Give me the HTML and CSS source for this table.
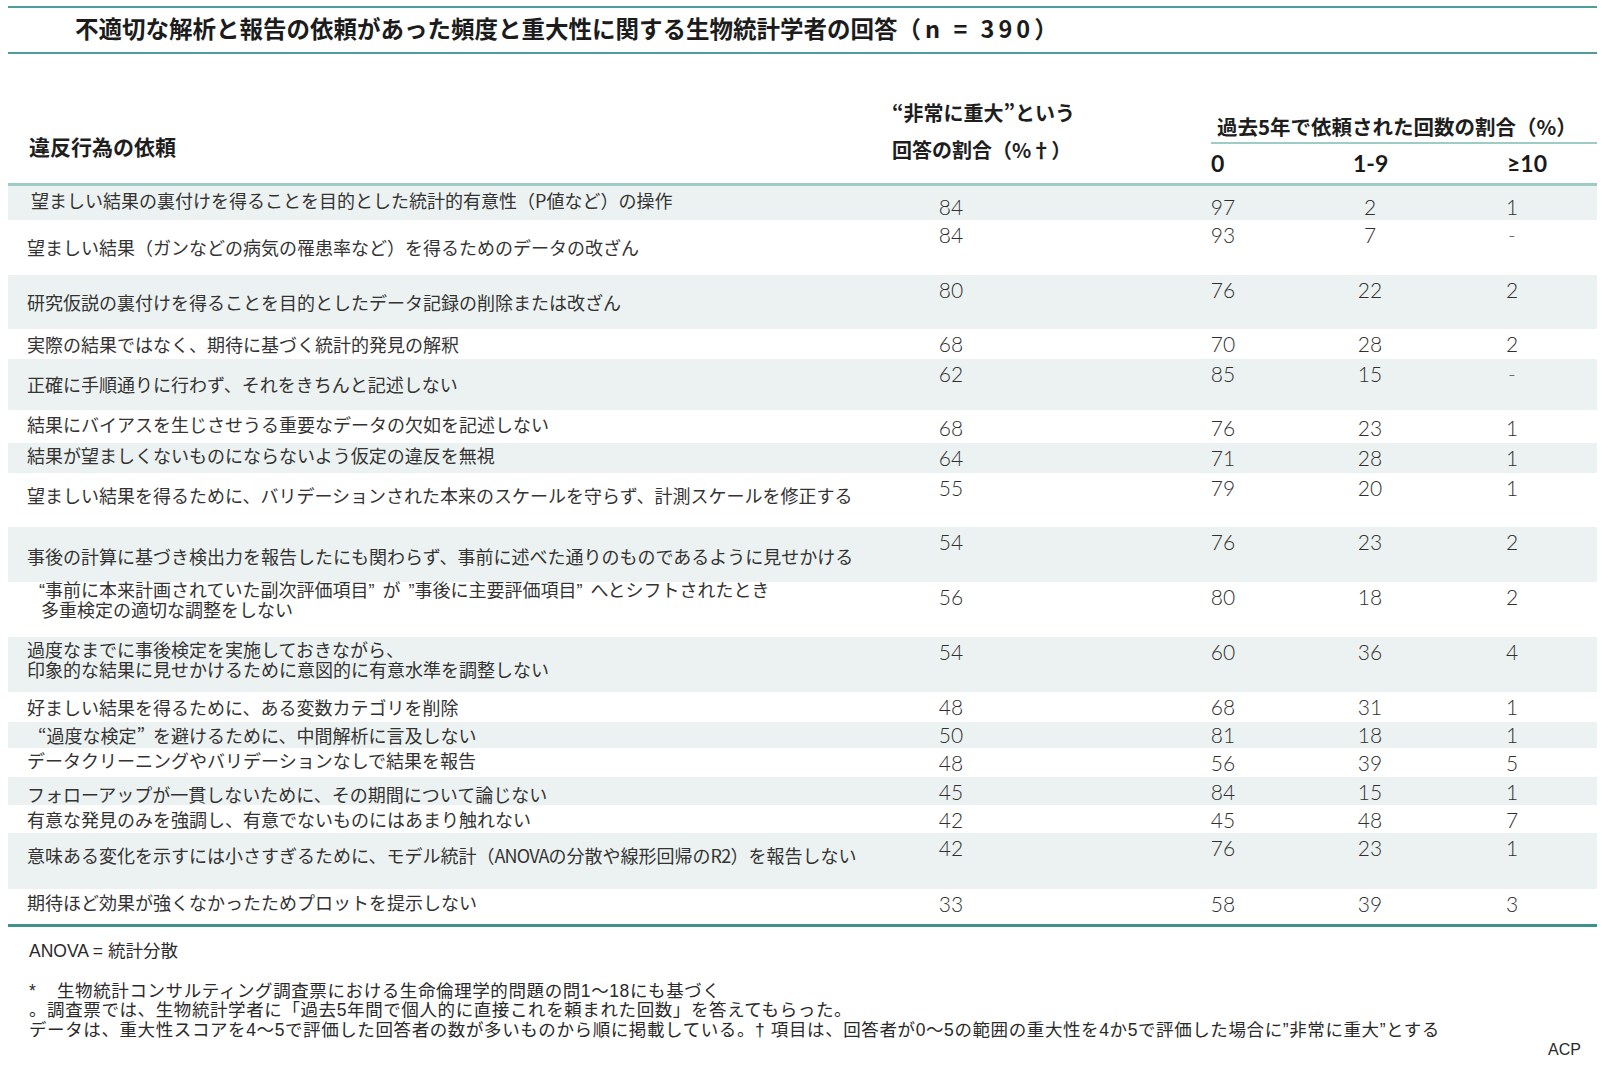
FILE: index.html
```html
<!DOCTYPE html>
<html lang="ja">
<head>
<meta charset="utf-8">
<title>生物統計学者の回答</title>
<link rel="stylesheet" href="styles.css">
</head>
<body>
<div class="page">
  <div class="title-bar">
    <h1 class="title">不適切な解析と報告の依頼があった頻度と重大性に関する生物統計学者の回答<span class="n">（n = 390）</span></h1>
  </div>

  <div class="table">
    <div class="thead">
      <div class="th-main">違反行為の依頼</div>
      <div class="th-sev">“非常に重大”という<br>回答の割合（%†）</div>
      <div class="th-freq">
        <div class="th-freq-title">過去5年で依頼された回数の割合（%）</div>
        <div class="th-freq-cols"><span>0</span><span>1-9</span><span>≥10</span></div>
      </div>
    </div>

    <div class="row shade h34">
      <div class="txt top ind">望ましい結果の裏付けを得ることを目的とした統計的有意性（P値など）の操作</div>
      <div class="num n1 lower">84</div><div class="num n2 lower">97</div><div class="num n3 lower">2</div><div class="num n4 lower">1</div>
    </div>
    <div class="row h55">
      <div class="txt">望ましい結果（ガンなどの病気の罹患率など）を得るためのデータの改ざん</div>
      <div class="num n1">84</div><div class="num n2">93</div><div class="num n3">7</div><div class="num n4 dash">-</div>
    </div>
    <div class="row shade h54">
      <div class="txt">研究仮説の裏付けを得ることを目的としたデータ記録の削除または改ざん</div>
      <div class="num n1">80</div><div class="num n2">76</div><div class="num n3">22</div><div class="num n4">2</div>
    </div>
    <div class="row h30">
      <div class="txt">実際の結果ではなく、期待に基づく統計的発見の解釈</div>
      <div class="num n1">68</div><div class="num n2">70</div><div class="num n3">28</div><div class="num n4">2</div>
    </div>
    <div class="row shade h51">
      <div class="txt">正確に手順通りに行わず、それをきちんと記述しない</div>
      <div class="num n1">62</div><div class="num n2">85</div><div class="num n3">15</div><div class="num n4 dash">-</div>
    </div>
    <div class="row h33">
      <div class="txt up5">結果にバイアスを生じさせうる重要なデータの欠如を記述しない</div>
      <div class="num n1 low3">68</div><div class="num n2 low3">76</div><div class="num n3 low3">23</div><div class="num n4 low3">1</div>
    </div>
    <div class="row shade h30">
      <div class="txt up6">結果が望ましくないものにならないよう仮定の違反を無視</div>
      <div class="num n1">64</div><div class="num n2">71</div><div class="num n3">28</div><div class="num n4">1</div>
    </div>
    <div class="row h54">
      <div class="txt up10">望ましい結果を得るために、バリデーションされた本来のスケールを守らず、計測スケールを修正する</div>
      <div class="num n1">55</div><div class="num n2">79</div><div class="num n3">20</div><div class="num n4">1</div>
    </div>
    <div class="row shade h55">
      <div class="txt dn3">事後の計算に基づき検出力を報告したにも関わらず、事前に述べた通りのものであるように見せかける</div>
      <div class="num n1">54</div><div class="num n2">76</div><div class="num n3">23</div><div class="num n4">2</div>
    </div>
    <div class="row h55">
      <div class="txt two up17 ind"><span class="ql">“</span>事前に本来計画されていた副次評価項目<span class="qr">”</span>が<span class="ql">”</span>事後に主要評価項目<span class="qr">”</span>へとシフトされたとき<br>&nbsp;&nbsp;多重検定の適切な調整をしない</div>
      <div class="num n1">56</div><div class="num n2">80</div><div class="num n3">18</div><div class="num n4">2</div>
    </div>
    <div class="row shade h55">
      <div class="txt two up8">過度なまでに事後検定を実施しておきながら、<br>印象的な結果に見せかけるために意図的に有意水準を調整しない</div>
      <div class="num n1">54</div><div class="num n2">60</div><div class="num n3">36</div><div class="num n4">4</div>
    </div>
    <div class="row h30">
      <div class="txt">好ましい結果を得るために、ある変数カテゴリを削除</div>
      <div class="num n1">48</div><div class="num n2">68</div><div class="num n3">31</div><div class="num n4">1</div>
    </div>
    <div class="row shade h26">
      <div class="txt ind2">“過度な検定”<span class="q">を避けるために、中間解析に言及しない</span></div>
      <div class="num n1 up2">50</div><div class="num n2 up2">81</div><div class="num n3 up2">18</div><div class="num n4 up2">1</div>
    </div>
    <div class="row h29">
      <div class="txt up5">データクリーニングやバリデーションなしで結果を報告</div>
      <div class="num n1">48</div><div class="num n2">56</div><div class="num n3">39</div><div class="num n4">5</div>
    </div>
    <div class="row shade h28">
      <div class="txt dn6">フォローアップが一貫しないために、その期間について論じない</div>
      <div class="num n1">45</div><div class="num n2">84</div><div class="num n3">15</div><div class="num n4">1</div>
    </div>
    <div class="row h28">
      <div class="txt">有意な発見のみを強調し、有意でないものにはあまり触れない</div>
      <div class="num n1">42</div><div class="num n2">45</div><div class="num n3">48</div><div class="num n4">7</div>
    </div>
    <div class="row shade h56">
      <div class="txt up12">意味ある変化を示すには小さすぎるために、モデル統計（<span class="cond">ANOVA</span>の分散や線形回帰の<span class="cond">R2</span>）を報告しない</div>
      <div class="num n1">42</div><div class="num n2">76</div><div class="num n3">23</div><div class="num n4">1</div>
    </div>
    <div class="row h35">
      <div class="txt up8">期待ほど効果が強くなかったためプロットを提示しない</div>
      <div class="num n1">33</div><div class="num n2">58</div><div class="num n3">39</div><div class="num n4">3</div>
    </div>
  </div>

  <div class="notes">
    <p class="abbr">ANOVA = 統計分散</p>
    <p class="foot"><span class="ast">*</span>生物統計コンサルティング調査票における生命倫理学的問題の問1〜18にも基づく</p>
    <p class="foot">。調査票では、生物統計学者に「過去5年間で個人的に直接これを頼まれた回数」を答えてもらった。</p>
    <p class="foot">データは、重大性スコアを4〜5で評価した回答者の数が多いものから順に掲載している。† 項目は、回答者が0〜5の範囲の重大性を4か5で評価した場合に”非常に重大”とする</p>
    <p class="src">ACP</p>
  </div>
</div>
</body>
</html>
```

FILE: styles.css
```css
* { box-sizing: border-box; }

body {
  margin: 0;
  background: #ffffff;
  color: #2e2e2e;
  font-family: "Noto Sans CJK JP", "Noto Sans", sans-serif;
}

.page {
  width: 1589px;
  margin-left: 8px;
}

/* ---------- title ---------- */
.title-bar {
  margin-top: 6px;
  height: 48px;
  border-top: 2px solid #4f9d99;
  border-bottom: 2px solid #4f9d99;
  display: flex;
  align-items: center;
  padding: 0 0 4px 67px;
}

.title {
  margin: 0;
  font-size: 23.5px;
  font-weight: 700;
  line-height: 30px;
  color: #1c1c1c;
  white-space: nowrap;
}

.title .n {
  letter-spacing: 4px;
}

/* ---------- table header ---------- */
.thead {
  display: flex;
  align-items: flex-end;
  height: 132px;
  border-bottom: 3px solid #9fcbc7;
  color: #1e1e1e;
  font-weight: 700;
}

.th-main {
  width: 884px;
  padding: 0 0 22px 21px;
  font-size: 21px;
  line-height: 30px;
}

.th-sev {
  width: 319px;
  padding-bottom: 15px;
  font-size: 20px;
  line-height: 37px;
}

.th-freq {
  flex: 1;
}

.th-freq-title {
  padding: 0 0 2px 6px;
  font-size: 20.5px;
  line-height: 28px;
  border-bottom: 2px solid #9fcbc7;
  white-space: nowrap;
}

.th-freq-cols {
  display: grid;
  grid-template-columns: 142px 154px 1fr;
  margin-top: 5px;
  padding-bottom: 6px;
  font-family: Lato, "Noto Sans", sans-serif;
  font-size: 23px;
  line-height: 28px;
  font-weight: 700;
  color: #1a1a1a;
}

/* ---------- rows ---------- */
.row {
  display: grid;
  grid-template-columns: 872px 142px 128px 146px 148px 136px 1fr;
  grid-template-rows: 100%;
}

.row:last-child {
  border-bottom: 3px solid #3f918c;
}

.shade { background: #ecf2f1; }

.h26 { height: 26px; }
.h28 { height: 28px; }
.h29 { height: 29px; }
.h30 { height: 30px; }
.h33 { height: 33px; }
.h34 { height: 34px; }
.h35 { height: 38px; }
.h51 { height: 51px; }
.h54 { height: 54px; }
.h55 { height: 55px; }
.h56 { height: 56px; }

.txt {
  grid-column: 1;
  grid-row: 1;
  align-self: center;
  padding-left: 19px;
  font-size: 18px;
  line-height: 21px;
  color: #333;
  white-space: nowrap;
}

.txt.two {
  font-family: "Liberation Sans", "Noto Sans CJK JP", sans-serif;
  line-height: 20px;
}

.txt .q { margin-left: 8px; }
.txt .ql { margin-left: 8px; }
.txt .qr { margin-right: 8px; }
.txt .cond { letter-spacing: -0.8px; }

.txt.top { align-self: start; padding-top: 4px; }
.txt.ind { padding-left: 23px; }
.txt.ind2 { padding-left: 30px; }
.up5 { padding-bottom: 5px; }
.up6 { padding-bottom: 6px; }
.up8 { padding-bottom: 8px; }
.up10 { padding-bottom: 10px; }
.up12 { padding-bottom: 12px; }
.up17 { padding-bottom: 17px; }
.dn3 { padding-top: 3px; }
.dn6 { padding-top: 6px; }

.num {
  grid-row: 1;
  align-self: start;
  text-align: center;
  font-family: Lato, "Noto Sans", sans-serif;
  font-weight: 300;
  font-size: 21px;
  line-height: 30px;
  color: #2f2f2f;
}

.num.lower { padding-top: 6px; }
.num.low3 { padding-top: 3px; }
.num.up2 { margin-top: -2px; }
.num.dash { color: #666; }

.n1 { grid-column: 2; }
.n2 { grid-column: 4; }
.n3 { grid-column: 5; }
.n4 { grid-column: 6; }

/* ---------- notes ---------- */
.notes {
  padding: 15px 16px 0 21px;
  font-family: "Liberation Sans", "Noto Sans CJK JP", sans-serif;
  font-size: 17.5px;
  line-height: 19.5px;
  letter-spacing: 0.6px;
  color: #2a2a2a;
}

.notes p { margin: 0; white-space: nowrap; }

.abbr { margin-bottom: 20px !important; letter-spacing: 0; }

.ast { display: inline-block; width: 28px; }

.src {
  text-align: right;
  font-size: 16px;
  letter-spacing: 0;
}
```
